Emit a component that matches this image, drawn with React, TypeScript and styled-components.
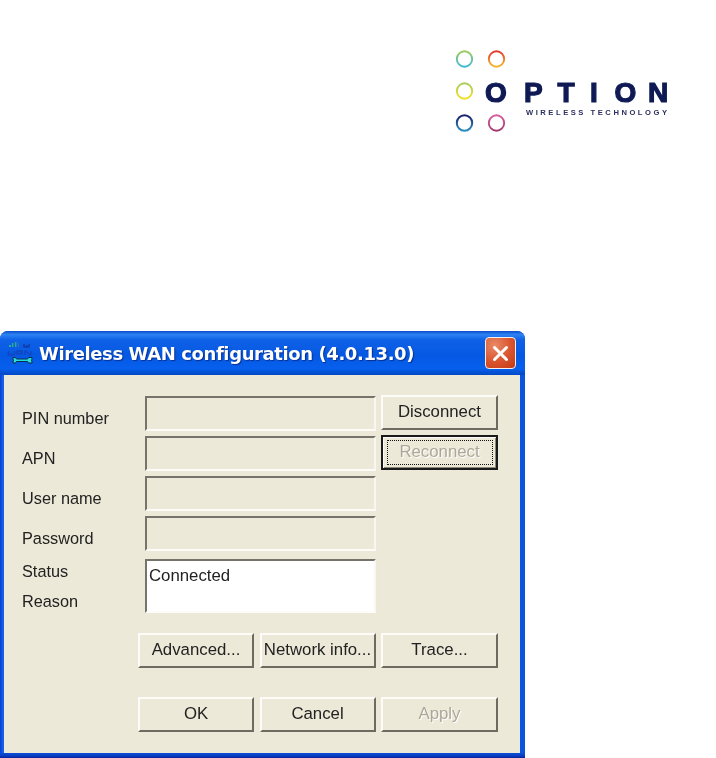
import React from "react";
import styled, { createGlobalStyle } from "styled-components";

const GlobalStyle = createGlobalStyle`
  html, body {
    margin: 0;
    padding: 0;
    background: #ffffff;
  }
  body {
    font-family: "Liberation Sans", Arial, sans-serif;
  }
`;

const Page = styled.div`
  width: 716px;
  height: 758px;
  overflow: hidden;
  display: flex;
  flex-direction: column;
`;

const LogoBar = styled.header`
  height: 331px;
  box-sizing: border-box;
  padding: 46px 0 0 450px;
`;

const LogoImage = styled.svg`
  display: block;
  filter: blur(0.4px);
`;

const Window = styled.section`
  width: 525px;
  height: 427px;
  box-sizing: border-box;
  display: flex;
  flex-direction: column;
  border-radius: 8px 8px 0 0;
  background: linear-gradient(90deg, #0a3fd0 0, #1463ea 3px, #0a55e0 100%);
  filter: blur(0.45px);
`;

const TitleBar = styled.div`
  height: 44px;
  flex: none;
  box-sizing: border-box;
  display: flex;
  align-items: center;
  padding: 0 9px 0 7px;
  border-radius: 8px 8px 0 0;
  background: linear-gradient(
    180deg,
    #0a4cc8 0%,
    #2f82f2 8%,
    #0f62e6 20%,
    #0558e2 55%,
    #0660ee 85%,
    #0348c4 100%
  );
`;

const Title = styled.h1`
  flex: 1;
  margin: 0 0 0 6px;
  font-family: "DejaVu Sans", Verdana, sans-serif;
  font-size: 18px;
  letter-spacing: -0.4px;
  font-weight: 700;
  color: #ffffff;
  text-shadow: 1px 1px 1px #0a2f8c;
  white-space: nowrap;
`;

const CloseButton = styled.div`
  width: 31px;
  height: 32px;
  box-sizing: border-box;
  display: flex;
  align-items: center;
  justify-content: center;
  border: 1px solid #f4f0ee;
  border-radius: 4px;
  background: radial-gradient(circle at 30% 25%, #e98a68 0%, #d9532c 55%, #c23a14 100%);
`;

const Client = styled.div`
  flex: 1;
  margin: 0 5px 0 4px;
  box-sizing: border-box;
  background: #ece9d8;
  padding: 20px 22px 0 14px;
  display: flex;
  flex-direction: column;
`;

const BottomEdge = styled.div`
  height: 5px;
  flex: none;
  background: linear-gradient(180deg, #0a4fd8 0%, #0a3cc0 60%, #06249a 100%);
`;

const FormGrid = styled.div`
  display: grid;
  grid-template-columns: 127px 231px 117px;
  grid-template-rows: repeat(4, 40px) auto;
`;

const Label = styled.label`
  font-size: 16.3px;
  color: #222222;
  padding: 13.5px 0 0 4px;
  white-space: nowrap;
`;

const StackLabel = styled.div`
  display: flex;
  flex-direction: column;
  gap: 11px;
  font-size: 16.3px;
  color: #222222;
  padding: 7px 0 0 4px;
`;

const Field = styled.div<{ $white?: boolean; $tall?: boolean }>`
  box-sizing: border-box;
  height: ${(p) => (p.$tall ? "54px" : "35px")};
  margin-top: ${(p) => (p.$tall ? "4px" : "1px")};
  border-style: solid;
  border-width: 2px;
  border-color: #75736a #f8f7f1 #fdfcf8 #75736a;
  background: ${(p) => (p.$white ? "#ffffff" : "#ece9d8")};
  padding: 4.5px 0 0 2px;
  font-size: 16.8px;
  color: #222222;
`;

const ButtonSlot = styled.div`
  padding-left: 5px;
`;

const Button = styled.button<{ $muted?: boolean; $focused?: boolean }>`
  width: 117px;
  height: 35px;
  box-sizing: border-box;
  padding: 0 0 1px;
  font-family: inherit;
  font-size: 16.8px;
  color: ${(p) => (p.$muted ? "#aca899" : "#222222")};
  text-shadow: ${(p) => (p.$muted ? "1px 1px 0 #ffffff" : "none")};
  background: #ece9d8;
  border-style: solid;
  border-width: 2px;
  border-color: ${(p) =>
    p.$focused ? "#1a1a1a" : "#fdfcf8 #6d6b60 #6d6b60 #fdfcf8"};
  box-shadow: ${(p) =>
    p.$focused ? "inset 1px 1px 0 #fbfaf5, inset -1px -1px 0 #8a887a" : "none"};
  display: flex;
  align-items: center;
  justify-content: center;
  white-space: nowrap;
`;

const FocusRing = styled.span`
  width: 104px;
  height: 23px;
  display: flex;
  align-items: center;
  justify-content: center;
  border: 1px dotted #111111;
`;

const ButtonRow = styled.div<{ $top: number }>`
  display: grid;
  grid-template-columns: 116px 116px 117px;
  column-gap: 5.5px;
  margin: ${(p) => p.$top}px 0 0 120px;
  width: 360px;
`;

const RowButton = styled(Button)`
  width: 100%;
`;

const LogoIcon = () => (
  <LogoImage width="230" height="90" viewBox="0 0 230 90">
    <defs>
      <linearGradient id="ringA" x1="0" y1="0" x2="0" y2="1">
        <stop offset="0" stopColor="#9ccb5a" />
        <stop offset="1" stopColor="#3fb8d6" />
      </linearGradient>
      <linearGradient id="ringB" x1="0" y1="0" x2="0" y2="1">
        <stop offset="0" stopColor="#e5352a" />
        <stop offset="1" stopColor="#f5b82e" />
      </linearGradient>
      <linearGradient id="ringC" x1="0" y1="0" x2="0" y2="1">
        <stop offset="0" stopColor="#a8cc58" />
        <stop offset="1" stopColor="#f2e020" />
      </linearGradient>
      <linearGradient id="ringD" x1="0" y1="0" x2="0" y2="1">
        <stop offset="0" stopColor="#1c1f6e" />
        <stop offset="1" stopColor="#2a8cc0" />
      </linearGradient>
      <linearGradient id="ringE" x1="0" y1="0" x2="0" y2="1">
        <stop offset="0" stopColor="#d85ca0" />
        <stop offset="1" stopColor="#a03a70" />
      </linearGradient>
    </defs>
    <circle cx="14.5" cy="13" r="7.7" fill="none" stroke="url(#ringA)" strokeWidth="1.9" />
    <circle cx="46.5" cy="13" r="7.7" fill="none" stroke="url(#ringB)" strokeWidth="1.9" />
    <circle cx="14.5" cy="45" r="7.7" fill="none" stroke="url(#ringC)" strokeWidth="1.9" />
    <circle cx="14.5" cy="77" r="7.7" fill="none" stroke="url(#ringD)" strokeWidth="2" />
    <circle cx="46.5" cy="77" r="7.7" fill="none" stroke="url(#ringE)" strokeWidth="1.9" />
    <text
      x="35 74 107.5 140 164.5 198"
      y="55.5"
      fontFamily="'Liberation Sans', Arial, sans-serif"
      fontWeight="700"
      fontSize="28"
      fill="#0f1a55"
      stroke="#0f1a55"
      strokeWidth="1.2"
    >
      OPTION
    </text>
    <text
      x="76"
      y="68.5"
      fontFamily="'Liberation Sans', Arial, sans-serif"
      fontWeight="700"
      fontSize="7.6"
      fill="#2a3060"
      textLength="141"
      lengthAdjust="spacing"
    >
      WIRELESS TECHNOLOGY
    </text>
  </LogoImage>
);

const WanIcon = () => (
  <svg width="26" height="26" viewBox="0 0 26 26">
    <path d="M2 5h2v2H2zM5 3h1.4v4H5zM8 2h1.4v5H8z" fill="#2fae8c" />
    <path d="M11 3h1v4h-1z" fill="#3a70b0" />
    <path d="M17 4v3h2.5V5M19.5 7H22V4" fill="none" stroke="#12349a" strokeWidth="1.2" />
    <path d="M1.5 11v4h3v-2M4.5 15h3v-4M10 15v-4h5v4M10 13.5h5M18 15v-4h.5l5 4h.5v-4" fill="none" stroke="#1246c0" strokeWidth="1.4" />
    <path d="M6 17.5h2.5l1 1.5h11l1-1.5h3.5v2l-1 .8 1 .7v2h-3.5l-1-1.5h-11l-1 1.5H6v-2l1-.7-1-.8z" fill="#25e0d8" stroke="#0a2a50" strokeWidth="1" />
  </svg>
);

const CloseIcon = () => (
  <svg width="17" height="17" viewBox="0 0 17 17">
    <path d="M2.5 2.5L14.5 14.5M14.5 2.5L2.5 14.5" stroke="#ffffff" strokeWidth="3" strokeLinecap="round" />
  </svg>
);

export default function App() {
  return (
    <Page>
      <GlobalStyle />
      <LogoBar>
        <LogoIcon />
      </LogoBar>
      <Window>
        <TitleBar>
          <WanIcon />
          <Title>Wireless WAN configuration (4.0.13.0)</Title>
          <CloseButton>
            <CloseIcon />
          </CloseButton>
        </TitleBar>
        <Client>
          <FormGrid>
            <Label>PIN number</Label>
            <Field />
            <ButtonSlot>
              <Button>Disconnect</Button>
            </ButtonSlot>
            <Label>APN</Label>
            <Field />
            <ButtonSlot>
              <Button $muted $focused>
                <FocusRing>Reconnect</FocusRing>
              </Button>
            </ButtonSlot>
            <Label>User name</Label>
            <Field />
            <div />
            <Label>Password</Label>
            <Field />
            <div />
            <StackLabel>
              <span>Status</span>
              <span>Reason</span>
            </StackLabel>
            <Field $white $tall>
              Connected
            </Field>
            <div />
          </FormGrid>
          <ButtonRow $top={20}>
            <RowButton>Advanced...</RowButton>
            <RowButton>Network info...</RowButton>
            <RowButton>Trace...</RowButton>
          </ButtonRow>
          <ButtonRow $top={29}>
            <RowButton>OK</RowButton>
            <RowButton>Cancel</RowButton>
            <RowButton $muted>Apply</RowButton>
          </ButtonRow>
        </Client>
        <BottomEdge />
      </Window>
    </Page>
  );
}
